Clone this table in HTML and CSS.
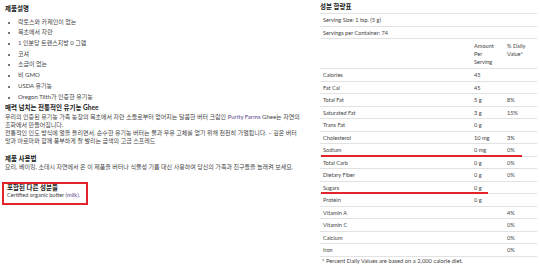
FILE: index.html
```html
<!DOCTYPE html>
<html lang="ko">
<head>
<meta charset="utf-8">
<link rel="stylesheet" href="styles.css">
</head>
<body>
<div class="page">
  <section class="left">
    <h3 class="h">제품설명</h3>
    <ul class="bullets">
      <li>락토스와 카제인이 없는</li>
      <li>목초에서 자란</li>
      <li><span class="lk">1</span> 인분당 트랜스지방 0 그램</li>
      <li>코셔</li>
      <li>소금이 없는</li>
      <li>비 GMO</li>
      <li>USDA 유기농</li>
      <li>Oregon Tilth가 인증한 유기농</li>
    </ul>
    <h3 class="h h2">매력 넘치는 전통적인 유기농 Ghee</h3>
    <p class="para">우리의 인증된 유기농 가족 농장의 목초에서 자란 소들로부터 얻어지는 달콤한 버터 크림인 <span class="lk">Purity Farms</span> Ghee는 자연의 조화에서 만들어집니다.<br>전통적인 인도 방식에 열을 올리면서, 순수한 유기농 버터는 물과 우유 고체를 얻기 위해 천천히 가열됩니다. – 깊은 버터맛과 아로마와 함께 풍부하게 잘 발리는 금색의 고급 스프레드</p>
    <h3 class="h h3">제품 사용법</h3>
    <p class="para">요리, 베이킹, 소테시 자연에서 온 이 제품을 버터나 식물성 기름 대신 사용하여 당신의 가족과 친구들을 놀래켜 보세요.</p>
    <div class="box">
      <h3 class="h">포함된 다른 성분들</h3>
      <p class="para">Certified organic butter <span class="lk">(milk)</span>.</p>
    </div>
  </section>
  <section class="right">
    <h3 class="h">성분 함량표</h3>
    <table class="facts">
      <tr class="top"><td colspan="3">Serving Size: 1 tsp. (5 g)</td></tr>
      <tr><td colspan="3">Servings per Container: 74</td></tr>
      <tr class="head"><td></td><td>Amount<br>Per<br>Serving</td><td>% Daily<br>Value*</td></tr>
      <tr><td>Calories</td><td>45</td><td></td></tr>
      <tr><td>Fat Cal</td><td>45</td><td></td></tr>
      <tr><td>Total Fat</td><td>5 g</td><td>8%</td></tr>
      <tr><td>Saturated Fat</td><td>3 g</td><td>15%</td></tr>
      <tr><td>Trans Fat</td><td>0 g</td><td></td></tr>
      <tr><td>Cholesterol</td><td>10 mg</td><td>3%</td></tr>
      <tr><td class="mk">Sodium<span class="mark m1"></span></td><td>0 mg</td><td>0%</td></tr>
      <tr><td>Total Carb</td><td>0 g</td><td>0%</td></tr>
      <tr><td>Dietary Fiber</td><td>0 g</td><td>0%</td></tr>
      <tr><td class="mk">Sugars<span class="mark m2"></span></td><td>0 g</td><td></td></tr>
      <tr><td>Protein</td><td>0 g</td><td></td></tr>
      <tr><td>Vitamin A</td><td></td><td>4%</td></tr>
      <tr><td>Vitamin C</td><td></td><td>0%</td></tr>
      <tr><td>Calcium</td><td></td><td>0%</td></tr>
      <tr><td>Iron</td><td></td><td>0%</td></tr>
    </table>
    <p class="foot">* Percent Daily Values are based on a 2,000 calorie diet.</p>
  </section>
</div>
</body>
</html>
```
FILE: styles.css
```css
html, body {
  margin: 0;
  padding: 0;
  background: #fff;
}
body {
  font-family: Lato, "Noto Sans CJK KR", sans-serif;
  color: #444;
  font-size: 6px;
}
.page {
  display: flex;
  width: 540px;
  height: 267px;
  overflow: hidden;
}
.left {
  width: 295px;
  flex: none;
  padding: 5px 0 0 5px;
}
.h {
  margin: 0;
  font-size: 6.5px;
  line-height: 8px;
  font-weight: 700;
  color: #1a1a1a;
}
.bullets {
  margin: 3.6px 0 0 0;
  padding: 0 0 0 13px;
  list-style: disc;
}
.bullets li {
  line-height: 10.7px;
  font-size: 6px;
}
.bullets li::marker {
  font-size: 5px;
}
.h2 {
  margin-top: 1.8px;
}
.para {
  margin: 0.5px 0 0 0;
  line-height: 8px;
  font-size: 6px;
}
.h3 {
  margin-top: 10px;
}
.lk {
  color: #5b3f8c;
}
.box {
  margin: 11px 0 0 -3px;
  width: 79px;
  border: 2px solid #e3242b;
  padding: 0 0 5px 3px;
}
.box .h {
  line-height: 7px;
}
.box .para {
  line-height: 7px;
  margin: 0;
  font-size: 5.6px;
  white-space: nowrap;
}
.right {
  width: 217px;
  flex: none;
  margin-left: 20px;
  padding-top: 3px;
}
.facts {
  margin-top: 2px;
  width: 217px;
  border-collapse: collapse;
  font-size: 5.6px;
  color: #444;
}
.facts td {
  padding: 2.25px 3px;
  line-height: 7px;
  border-bottom: 1px solid #e2e2e2;
  vertical-align: top;
  white-space: nowrap;
}
.facts tr.top td {
  border-top: 1px solid #e2e2e2;
}
.facts td:nth-child(1) {
  width: 145px;
}
.facts td:nth-child(2) {
  width: 27px;
}
.facts tr.head td {
  line-height: 8px;
  padding: 2.5px 3px;
}
.facts td.mk {
  position: relative;
}
.mark {
  position: absolute;
  left: 1px;
  bottom: -1px;
  height: 2px;
  background: #e3242b;
}
.m1 {
  width: 201px;
}
.m2 {
  width: 167px;
}
.foot {
  margin: 0;
  padding-left: 2px;
  line-height: 8px;
  font-size: 5.8px;
  color: #444;
}
```
